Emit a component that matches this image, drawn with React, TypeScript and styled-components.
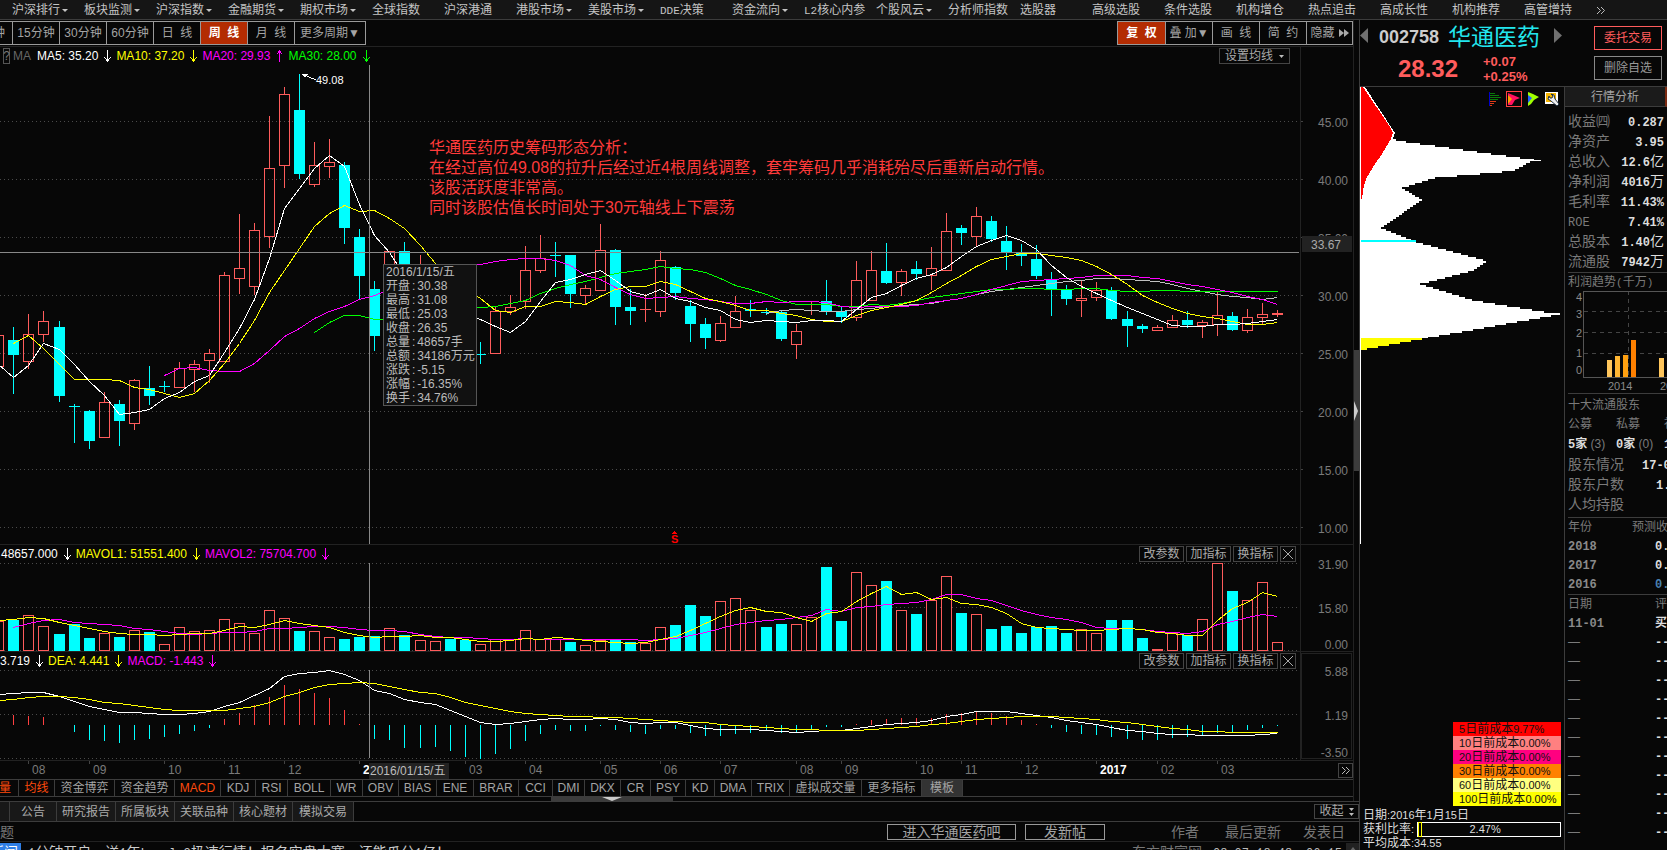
import React from "react";
import styled, { createGlobalStyle } from "styled-components";

const GlobalStyle = createGlobalStyle`
  *, *::before, *::after { box-sizing: border-box; }
  body { margin: 0; background: #070707; overflow: hidden; }
  button { margin: 0; padding: 0; font: inherit; color: inherit; background: none; border: 0; cursor: pointer; }
  h1, h2, p, ul, dl, dd, dt { margin: 0; padding: 0; font: inherit; list-style: none; }
  table { border-collapse: collapse; }
`;

const SANS = `"Liberation Sans", "Noto Sans CJK SC", sans-serif`;
const MONO = `"Liberation Mono", "Noto Sans CJK SC", monospace`;
const CYAN = "#00ffff";
const RED = "#ff5c5c";
const LINE = "#3c3c3c";

/* ---------- text with half-width latin runs ---------- */

const Latin = styled.span<{ $size: number; $sans?: boolean }>`
  font-family: ${(p) => (p.$sans ? SANS : MONO)};
  font-size: ${(p) => p.$size}px;
  line-height: 0;
`;

function Mixed({ text, size = 11, sans = false }: { text: string; size?: number; sans?: boolean }) {
  return (
    <>
      {text.split(/([\x20-\x7e]+)/).map((part, i) =>
        i % 2 ? <Latin key={i} $size={size} $sans={sans}>{part}</Latin> : part
      )}
    </>
  );
}

/* ---------- page frame ---------- */

const Page = styled.div`
  display: flex;
  flex-direction: column;
  height: 100vh;
  overflow: hidden;
  background: #070707;
  color: #aaa;
  font: 12px/14px ${SANS};
  white-space: nowrap;
`;

const Nav = styled.nav`
  display: flex;
  flex: none;
  height: 20px;
  padding-top: 1px;
  padding-left: 12px;
  background: #151515;
  border-bottom: 1px solid ${LINE};
  overflow: hidden;
`;

const NavItem = styled.button<{ $menu?: boolean }>`
  display: flex;
  align-items: center;
  flex: none;
  width: 72px;
  color: #c4c4c4;
  &::after {
    content: "";
    display: ${(p) => (p.$menu ? "block" : "none")};
    margin-left: 2px;
    border: 3px solid transparent;
    border-top-color: #c4c4c4;
    border-bottom: 0;
  }
`;

const Body = styled.div`
  display: grid;
  grid-template-columns: minmax(0, 1fr) 308px;
  flex: 1;
  min-height: 0;
`;

const Left = styled.main`
  display: flex;
  flex-direction: column;
  min-width: 0;
  overflow: hidden;
`;

const Upper = styled.div`
  display: flex;
  border-bottom: 1px solid ${LINE};
`;

const Charts = styled.div`
  flex: 1;
  min-width: 0;
  border-right: 1px solid #222;
`;

const Splitter = styled.div`
  display: flex;
  justify-content: center;
  flex-direction: column;
  width: 5px;
`;

const SplitHandle = styled.button`
  display: flex;
  align-items: center;
  width: 5px;
  height: 121px;
  background: ${LINE};
`;

/* ---------- toolbar ---------- */

const Toolbar = styled.div`
  display: flex;
  justify-content: space-between;
  height: 27px;
  padding-top: 1px;
  border-bottom: 1px solid #222;
`;

const ToolGroup = styled.div<{ $open?: boolean }>`
  display: flex;
  height: 24px;
  border: 1px solid #999;
  border-left-width: ${(p) => (p.$open ? 0 : 1)}px;
`;

const ToolButton = styled.button<{ $w: number; $on?: boolean; $end?: boolean }>`
  display: flex;
  align-items: center;
  justify-content: ${(p) => (p.$end ? "flex-end" : "center")};
  gap: 4px;
  white-space: pre;
  width: ${(p) => p.$w}px;
  padding-right: ${(p) => (p.$end ? 7 : 0)}px;
  overflow: hidden;
  border-right: 1px solid #999;
  background: ${(p) => (p.$on ? "#b32c02" : "transparent")};
  color: ${(p) => (p.$on ? "#fff" : "#a4a4a4")};
  font-weight: ${(p) => (p.$on ? 700 : 400)};
  &:last-child { border-right: 0; }
`;

/* ---------- chart panes ---------- */

const Pane = styled.section`
  display: flex;
  border-bottom: 1px solid #222;
`;

const Plot = styled.div`
  display: flex;
  flex-direction: column;
  flex: 1;
  min-width: 0;
  position: relative;
`;

const PaneHead = styled.header`
  display: flex;
  align-items: center;
  justify-content: space-between;
  height: 18px;
  padding-right: 4px;
`;

const Legend = styled.div<{ $pad: number }>`
  display: flex;
  align-items: center;
  padding-left: ${(p) => p.$pad}px;
`;

const LegendText = styled.span<{ $c: string }>`
  color: ${(p) => p.$c};
`;

const HelpMark = styled.button`
  width: 7px;
  height: 16px;
  margin-right: 3px;
  border: 1px solid #555;
  color: #777;
  line-height: 14px;
  display: flex;
  justify-content: center;
`;

const LegendName = styled.span`
  width: 24px;
  color: #666;
`;

const PaneTools = styled.div`
  display: flex;
  gap: 2px;
`;

const PaneButton = styled.button<{ $w: number }>`
  display: flex;
  align-items: center;
  justify-content: center;
  gap: 6px;
  width: ${(p) => p.$w}px;
  height: 16px;
  border: 1px solid #444;
  line-height: 14px;
`;

const Drawing = styled.svg<{ $h: number }>`
  display: block;
  width: 100%;
  height: ${(p) => p.$h}px;
  overflow: hidden;
`;

const Axis = styled.svg<{ $h: number; $box?: boolean }>`
  display: block;
  flex: none;
  width: 53px;
  height: ${(p) => p.$h}px;
  border-left: 1px solid #222;
  outline: ${(p) => (p.$box ? "1px solid #222" : "none")};
  outline-offset: -2px;
  font: 12px ${SANS};
  fill: #7a7a7a;
`;

const Tooltip = styled.dl`
  position: absolute;
  left: 383px;
  top: 217px;
  width: 94px;
  padding-left: 2px;
  background: #111;
  border: 1px solid #555;
  color: #bcbcbc;
`;

const TipRow = styled.div`
  display: flex;
  gap: 2px;
  height: 14px;
`;

const Note = styled.p`
  position: absolute;
  left: 429px;
  top: 91px;
  color: #ff3b3b;
  font-size: 16px;
  line-height: 20px;
`;

const HighMark = styled.span`
  position: absolute;
  left: 316px;
  top: 26px;
  color: #fff;
`;

const TimeAxis = styled.div`
  position: relative;
  display: flex;
  align-items: center;
  justify-content: flex-end;
  height: 18px;
`;

const TimeSvg = styled.svg`
  flex: 1;
  min-width: 0;
  height: 18px;
  font: 12px ${SANS};
  fill: #7a7a7a;
`;

const DateFlag = styled.span`
  position: absolute;
  left: 369px;
  top: 2px;
  width: 80px;
  height: 16px;
  padding-left: 1px;
  line-height: 17px;
  background: #222;
  color: #bcbcbc;
`;

const MoreButton = styled.button`
  display: flex;
  align-items: center;
  justify-content: center;
  width: 15px;
  height: 15px;
  border: 1px solid #444;
`;

const IndicatorBar = styled.div`
  display: flex;
  height: 18px;
  border-top: 1px solid ${LINE};
  border-bottom: 1px solid ${LINE};
`;

const Indicator = styled.button<{ $w: number; $hot?: boolean; $fill?: boolean }>`
  display: flex;
  align-items: center;
  justify-content: center;
  flex: none;
  width: ${(p) => p.$w}px;
  overflow: hidden;
  border-right: 1px solid ${LINE};
  background: ${(p) => (p.$fill ? "#333" : "transparent")};
  color: ${(p) => (p.$hot ? "#ff4a0c" : "#a4a4a4")};
`;

const FirstIndicator = styled(Indicator)`
  justify-content: flex-end;
  padding-right: 7px;
`;

const BottomHandle = styled.button`
  display: flex;
  justify-content: center;
  width: 122px;
  height: 4px;
  margin-left: 551px;
  background: ${LINE};
`;

/* ---------- lower strips ---------- */

const TabBar = styled.div`
  display: flex;
  align-items: center;
  justify-content: space-between;
  flex: none;
  height: 20px;
  border-bottom: 1px solid ${LINE};
`;

const Tabs = styled.div`
  display: flex;
  height: 19px;
`;

const Tab = styled.button<{ $w: number }>`
  width: ${(p) => p.$w}px;
  background: #181818;
  border-right: 1px solid ${LINE};
`;

const FoldButton = styled.button`
  display: flex;
  align-items: center;
  justify-content: center;
  gap: 5px;
  width: 45px;
  height: 15px;
  border: 1px solid #444;
  line-height: 13px;
`;

const BoardHead = styled.div`
  display: flex;
  align-items: center;
  justify-content: space-between;
  flex: none;
  height: 20px;
  border-bottom: 1px solid #222;
  color: #777;
  font-size: 14px;
`;

const BoardRight = styled.div`
  display: flex;
  align-items: center;
`;

const BoardButton = styled.button<{ $w: number }>`
  width: ${(p) => p.$w}px;
  height: 16px;
  margin-right: 9px;
  border: 1px solid #999;
  color: #a4a4a4;
  line-height: 14px;
`;

const HeadCell = styled.span<{ $w: number; $first?: boolean }>`
  width: ${(p) => p.$w}px;
  margin-left: ${(p) => (p.$first ? 57 : 0)}px;
`;

const PostRow = styled.div`
  display: flex;
  justify-content: space-between;
  flex: none;
  height: 22px;
  padding-top: 1px;
  font-size: 14px;
  line-height: 19px;
`;

const PostTag = styled.span`
  display: inline-flex;
  justify-content: flex-end;
  width: 21px;
  margin-right: 7px;
  padding-right: 3px;
  background: #2f7fe6;
  color: #fff;
  overflow: hidden;
`;

const PostTitle = styled.a`
  display: flex;
  color: #ccc;
  text-decoration: none;
`;

const PostMeta = styled.div`
  display: flex;
  color: #bbb;
`;

const PostCell = styled.span<{ $w: number; $dim?: boolean }>`
  width: ${(p) => p.$w}px;
  color: ${(p) => (p.$dim ? "#777" : "#bbb")};
`;

const ScrollUp = styled.button`
  width: 13px;
  height: 20px;
  background: #222;
  display: flex;
  justify-content: center;
  padding-top: 4px;
`;

/* ---------- right panel ---------- */

const Right = styled.aside`
  display: flex;
  flex-direction: column;
  min-width: 0;
  border-left: 1px solid ${LINE};
  overflow: hidden;
`;

const Quote = styled.header`
  display: flex;
  flex: none;
  justify-content: space-between;
  height: 67px;
  padding-right: 5px;
  border-bottom: 1px solid ${LINE};
`;

const QuoteMain = styled.div`
  width: 202px;
`;

const QuoteName = styled.div`
  display: flex;
  align-items: center;
  height: 33px;
`;

const Code = styled.span`
  width: 69px;
  margin-left: 11px;
  color: #ccc;
  font-size: 18px;
  font-weight: 700;
`;

const StockName = styled.h1`
  width: 106px;
  color: #22e6ee;
  font-size: 23px;
  line-height: 30px;
`;

const QuotePrice = styled.div`
  display: flex;
  align-items: center;
  padding-left: 38px;
  color: ${RED};
`;

const Price = styled.span`
  width: 85px;
  font-size: 24px;
  font-weight: 700;
  line-height: 32px;
`;

const Change = styled.span`
  font-size: 13px;
  font-weight: 700;
  line-height: 15px;
`;

const QuoteActions = styled.div`
  display: flex;
  flex-direction: column;
  gap: 6px;
  padding-top: 6px;
`;

const ActionButton = styled.button<{ $hot?: boolean }>`
  width: 68px;
  height: 24px;
  border: 1px solid ${(p) => (p.$hot ? RED : "#888")};
  color: ${(p) => (p.$hot ? RED : "#999")};
`;

const RightBody = styled.div`
  display: grid;
  grid-template-columns: 204px minmax(0, 1fr);
  flex: 1;
  min-height: 0;
`;

const Chips = styled.section`
  display: flex;
  flex-direction: column;
  position: relative;
  min-height: 0;
  color: #ddd;
`;

const ChipTools = styled.div`
  position: absolute;
  top: 4px;
  right: 4px;
  display: flex;
  gap: 3px;
`;

const ChipTool = styled.button<{ $on?: boolean }>`
  width: 16px;
  height: 16px;
  border: 1px solid ${(p) => (p.$on ? "#ff4040" : "transparent")};
`;

const CostList = styled.ul`
  width: 108px;
  margin: auto 3px 2px auto;
  color: #111;
`;

const CostItem = styled.li<{ $bg: string }>`
  height: 14px;
  padding-left: 6px;
  line-height: 14px;
  background: ${(p) => p.$bg};
`;

const ChipFoot = styled.div`
  padding-left: 3px;
  color: #ddd;
`;

const ChipLine = styled.p`
  display: flex;
  align-items: center;
  height: 14px;
  line-height: 14px;
`;

const Gauge = styled.div`
  display: flex;
  align-items: center;
  width: 144px;
  height: 15px;
  margin-left: 3px;
  border: 1px solid #fff;
`;

const GaugeFill = styled.span`
  width: 4px;
  height: 15px;
  border: 1px solid #ff0;
`;

const GaugeText = styled.span`
  flex: 1;
  padding-right: 12px;
  text-align: center;
`;

const Info = styled.section`
  display: flex;
  flex-direction: column;
  min-width: 0;
  overflow: hidden;
  border-left: 1px solid ${LINE};
  color: #7a7a7a;
`;

const InfoTab = styled.button`
  height: 20px;
  flex: none;
  background: #1b1b1b;
  border-bottom: 1px solid ${LINE};
  border-right: 2px solid #7a2a12;
  color: #a4a4a4;
`;

const InfoBlock = styled.div<{ $pt: number; $pb: number }>`
  flex: none;
  margin-left: 3px;
  padding: ${(p) => p.$pt}px 0 ${(p) => p.$pb}px;
  border-bottom: 1px solid ${LINE};
`;

const Facts = styled.table`
  width: 96px;
  font-size: 14px;
  line-height: 20px;
  th, td { padding: 0; height: 20px; font-weight: 400; text-align: left; }
  td { text-align: right; color: #ddd; font-weight: 700; }
`;

const Unit = styled.span`
  font-size: 14px;
  font-weight: 400;
`;

const Wide = styled.table<{ $lh: number; $fs: number; $first: number }>`
  width: 160px;
  table-layout: fixed;
  font-size: ${(p) => p.$fs}px;
  line-height: ${(p) => p.$lh}px;
  th, td { padding: 0; height: ${(p) => p.$lh}px; font-weight: 400; text-align: left; }
  th:first-child { width: ${(p) => p.$first}px; }
`;

const Strong = styled.span<{ $c?: string; $indent?: number }>`
  margin-left: ${(p) => p.$indent || 0}px;
  color: ${(p) => p.$c || "#ddd"};
  font-weight: 700;
`;

const InfoTitle = styled.h2`
  height: 18px;
  line-height: 18px;
`;

const Funds = styled.div`
  display: grid;
  grid-template-columns: 48px 48px 48px;
  line-height: 20px;
`;

/* ---------- data ---------- */

const NAV: [string, boolean][] = [
  ["沪深排行", true], ["板块监测", true], ["沪深指数", true], ["金融期货", true], ["期权市场", true],
  ["全球指数", false], ["沪深港通", false], ["港股市场", true], ["美股市场", true], ["DDE决策", false],
  ["资金流向", true], ["L2核心内参", false], ["个股风云", true], ["分析师指数", false], ["选股器", false],
  ["高级选股", false], ["条件选股", false], ["机构增仓", false], ["热点追击", false], ["高成长性", false],
  ["机构推荐", false], ["高管增持", false],
];

const COUNT = 86;
const barX = (i: number) => -2 + i * 15 + [4, 28, 51, 75].filter((n) => i >= n).length;

/* high, body top, body bottom, low, 1 when the week closed up */
const CANDLES: number[][] = [
  [335,335,367,367,1],[327,340,355,394,0],[314,334,362,369,1],[311,321,335,342,1],[321,327,396,402,0],
  [404,406,407,443,0],[410,411,441,449,0],[392,402,438,438,1],[400,404,421,446,0],[379,380,424,430,1],
  [366,388,396,405,0],[381,386,387,392,0],[362,368,388,388,1],[360,364,370,392,1],[349,353,361,383,1],
  [272,275,362,362,1],[214,268,279,294,1],[223,230,287,295,1],[116,168,237,248,1],[87,94,166,188,1],
  [74,110,174,179,0],[142,165,185,187,1],[139,162,167,178,1],[162,165,228,244,0],[229,237,276,299,0],
  [281,289,336,351,0],[251,251,300,300,1],[242,251,300,300,0],[255,270,300,310,1],[270,280,300,310,1],
  [290,300,330,340,0],[300,320,350,360,0],[342,354,355,364,0],[307,311,354,354,1],[295,307,312,315,1],
  [246,270,302,309,1],[235,258,271,273,1],[242,255,256,277,0],[255,255,294,308,0],[285,288,296,304,1],
  [224,250,291,291,1],[249,250,307,325,0],[289,307,311,325,0],[294,309,310,322,1],[251,260,312,317,1],
  [266,267,293,300,0],[300,306,324,342,0],[318,324,338,349,0],[316,323,341,342,1],[296,311,328,328,1],
  [300,309,311,317,0],[308,312,313,315,0],[311,312,339,341,0],[324,331,345,359,1],[301,301,302,315,1],
  [280,301,312,315,0],[307,311,317,323,0],[261,280,318,321,1],[251,270,301,301,1],[243,271,283,284,0],
  [269,271,283,296,1],[261,269,274,280,0],[247,268,276,290,1],[213,231,271,271,1],[225,228,233,245,0],
  [207,216,237,246,1],[216,221,239,242,0],[226,241,252,270,0],[244,253,256,266,0],[245,259,276,279,0],
  [272,279,289,316,0],[285,289,299,305,0],[281,298,301,317,1],[282,290,298,301,1],[287,290,319,320,0],
  [311,319,326,347,0],[324,326,329,333,0],[325,327,331,331,1],[315,320,328,328,1],[311,320,325,328,0],
  [320,322,326,338,1],[292,315,325,336,1],[312,316,330,331,0],[309,317,331,333,1],[303,314,318,324,1],
  [310,313,315,317,1],
];

const MA5 = [364,377,365,343,349,364,381,395,414,412,409,398,392,381,375,352,328,299,258,208,188,168,155,166,204,235,252,275,290,300,308,314,319,326,332,321,301,282,279,274,270,280,291,295,289,298,301,307,310,319,322,320,321,322,320,320,321,309,297,293,285,278,274,267,256,246,240,235,240,249,265,277,286,293,300,307,313,319,325,326,326,324,324,323,321,319];
const MA10 = [359,343,335,348,364,379,379,379,380,387,389,393,397,393,380,363,343,320,292,270,248,226,213,205,211,210,218,228,245,263,276,288,298,310,312,306,306,301,302,304,296,289,286,286,281,284,291,298,301,305,310,310,313,315,319,321,321,315,310,307,304,300,292,283,275,266,259,256,253,253,255,257,260,266,274,284,295,302,308,313,316,318,321,324,324,322];
const MA20 = [375,368,367,370,371,371,363,350,336,328,318,311,306,299,295,289,283,278,273,269,266,264,261,259,258,258,260,265,275,279,287,294,298,297,296,298,299,301,303,303,301,302,301,301,302,306,307,306,306,306,305,302,300,298,294,289,285,281,280,279,278,277,275,275,275,277,278,281,284,286,289,292,296,299,304];
const MA30 = [332,322,315,315,319,319,317,315,313,311,309,307,306,303,300,293,288,284,281,277,273,271,269,266,268,269,272,278,285,289,294,300,304,304,304,306,306,304,305,303,300,297,295,293,291,289,289,288,288,289,289,288,288,290,291,291,290,290,291,291,291,291,291,291,291];
const MA60 = [313,310,309,310,311,311,309,308,306,305,304,303,300,298,294,291,289,287,285,283,281,280,278,278,279,280,281,284,288,291,294,296,297,299,297];

/* top of each volume bar; negative marks a falling week */
const VOL = [621,-620,615,626,-634,-624,-638,633,-637,630,-632,644,627,631,630,619,623,633,610,618,-631,631,637,-639,-637,-636,628,-635,640,641,-639,-640,644,639,639,630,639,639,-642,645,640,-640,-642,643,627,-625,-605,-616,601,598,610,-627,-624,624,617,-567,-621,572,585,-581,610,-614,600,576,-613,614,-629,-626,-633,-627,-626,-633,629,633,-620,-620,-638,649,633,-635,619,563,-591,600,582,642];
const MAVOL1 = [620,619,617,618,622,625,628,631,633,634,634,635,634,633,633,630,626,627,624,620,623,625,627,632,635,637,636,636,635,637,637,639,641,641,640,638,639,637,638,640,641,642,643,642,639,636,630,623,616,610,607,611,612,617,621,613,611,601,593,586,594,592,599,597,603,604,607,613,623,627,628,629,630,630,629,628,629,632,633,635,635,620,608,602,592,596];
const MAVOL2 = [627,623,620,619,622,623,624,625,628,629,631,633,634,633,632,632,631,628,628,627,626,626,627,629,630,630,631,634,636,637,637,638,639,639,638,639,639,639,639,639,639,639,640,639,638,635,632,628,624,622,620,619,617,615,609,611,607,606,604,603,602,599,594,594,598,600,605,610,614,617,619,622,627,628,628,629,631,632,633,631,624,621,617,614,616];

const MACD_BARS = [725,715,716,717,725,732,740,741,743,740,739,737,734,731,728,719,713,705,697,685,689,693,698,710,724,739,740,748,748,747,751,757,759,754,749,741,734,730,731,731,726,730,732,734,729,729,733,736,736,734,733,731,733,733,729,727,727,724,720,719,718,718,718,714,713,711,713,716,720,724,728,732,734,735,737,739,740,740,738,737,735,733,732,730,728,726];
const DIF = [694,693,692,692,696,701,706,709,712,712,713,714,714,713,711,706,702,695,688,676,673,672,670,674,680,690,693,699,702,704,710,716,722,724,723,721,719,718,719,719,718,719,722,723,722,722,725,728,729,729,729,730,731,732,731,730,730,728,726,724,723,722,720,716,714,711,711,711,713,715,717,720,722,724,727,730,731,733,734,734,735,735,735,735,734,733];
const DEA = [700,699,697,696,696,697,699,702,703,705,707,709,710,710,710,710,708,706,702,696,692,687,684,683,682,683,686,689,692,693,697,702,705,708,711,713,714,715,716,716,717,717,718,719,720,721,722,722,724,725,726,727,728,729,729,730,730,730,729,728,727,726,724,723,721,719,718,717,716,716,716,717,718,719,721,722,724,726,728,729,731,731,732,732,732,732];

const MONTHS: [number, string][] = [
  [28,"08"],[89,"09"],[164,"10"],[224,"11"],[284,"12"],[359,"2016"],[465,"03"],[525,"04"],[600,"05"],[660,"06"],
  [720,"07"],[796,"08"],[841,"09"],[916,"10"],[961,"11"],[1021,"12"],[1096,"2017"],[1157,"02"],[1217,"03"],
];

const TIP: [string, string][] = [
  ["开盘","30.38"],["最高","31.08"],["最低","25.03"],["收盘","26.35"],["总量","48657手"],
  ["总额","34186万元"],["涨跌","-5.15"],["涨幅","-16.35%"],["换手","34.76%"],
];

const INDICATORS: [string, number][] = [
  ["均线",36],["资金博弈",60],["资金趋势",60],["MACD",46],["KDJ",35],["RSI",32],["BOLL",43],["WR",32],["OBV",36],
  ["BIAS",38],["ENE",37],["BRAR",45],["CCI",34],["DMI",32],["DKX",36],["CR",30],["PSY",35],["KD",29],["DMA",37],
  ["TRIX",38],["虚拟成交量",72],["更多指标",60],
];

const COSTS: [string, string][] = [
  ["5日前成本9.77%","#ff0000"],["10日前成本0.00%","#ff8080"],["20日前成本0.00%","#ff0080"],
  ["30日前成本0.00%","#ff8000"],["60日前成本0.00%","#ffff80"],["100日前成本0.00%","#ffff00"],
];

const FACTS: [string, string, string][] = [
  ["收益㈣","0.287",""],["净资产","3.95",""],["总收入","12.6","亿"],["净利润","4016","万"],
  ["毛利率","11.43%",""],["ROE","7.41%",""],["总股本","1.40","亿"],["流通股","7942","万"],
];

/* ---------- drawing helpers ---------- */

function Curve({ ys, from = 0, color }: { ys: number[]; from?: number; color: string }) {
  return (
    <polyline
      fill="none"
      stroke={color}
      points={ys.map((y, k) => `${barX(from + k) + 0.5},${y + 0.5}`).join(" ")}
    />
  );
}

function Grid({ ys }: { ys: number[] }) {
  return (
    <>
      {ys.map((y) => (
        <line key={y} x1="0" x2="100%" y1={y + 0.5} y2={y + 0.5} stroke="#4a4a4a" strokeDasharray="1 3" />
      ))}
    </>
  );
}

function Arrow({ color, up }: { color: string; up?: boolean }) {
  return (
    <svg width="18" height="12" viewBox="0 0 18 12" shapeRendering="crispEdges" aria-hidden="true">
      <path
        d={up ? "M9.5 12V1M6.5 4.5L9.5 1L12.5 4.5" : "M9.5 0V11M6.5 7.5L9.5 11L12.5 7.5"}
        fill="none"
        stroke={color}
      />
    </svg>
  );
}

function Candle({ i }: { i: number }) {
  const [hi, top, bottom, lo, up] = CANDLES[i];
  const x = barX(i);
  const c = up ? RED : CYAN;
  const h = bottom - top;
  return (
    <g>
      {hi < top && <rect x={x} y={hi} width="1" height={top - hi} fill={c} />}
      {lo > bottom && <rect x={x} y={bottom} width="1" height={lo - bottom} fill={c} />}
      {up && h > 2 ? (
        <rect x={x - 4.5} y={top + 0.5} width="10" height={h - 1} fill="none" stroke={c} />
      ) : (
        <rect x={x - 5} y={top} width="11" height={h} fill={c} />
      )}
    </g>
  );
}

function DoubleChevron() {
  return (
    <svg width="9" height="9" viewBox="0 0 9 9" aria-hidden="true">
      <path d="M1 1L4.500 4.500L1 8M5 1L8.500 4.500L5 8" fill="none" stroke="#bbb" />
    </svg>
  );
}

function PaneActions() {
  return (
    <PaneTools>
      <PaneButton $w={45}>改参数</PaneButton>
      <PaneButton $w={45}>加指标</PaneButton>
      <PaneButton $w={45}>换指标</PaneButton>
      <PaneButton $w={16} aria-label="关闭">
        <svg width="10" height="10" viewBox="0 0 10 10"><path d="M0 0L10 10M10 0L0 10" stroke="#aaa" /></svg>
      </PaneButton>
    </PaneTools>
  );
}

/* right edge of the chip histogram: x, y */
const CHIP_EDGE: [number, number][] = [
  [4,0],[30,41],[34,46],[32,52],[39,54],[174,73],[153,84],[75,91],[42,101],[62,113],[21,141],[56,155],
  [127,174],[112,184],[65,196],[60,197],[66,199],[112,213],[123,215],[190,226],[200,227],[191,229],[68,251],[7,262],[1,263],
];

function edgeAt(y: number) {
  for (let k = 1; k < CHIP_EDGE.length; k++) {
    const [x0, y0] = CHIP_EDGE[k - 1];
    const [x1, y1] = CHIP_EDGE[k];
    if (y <= y1) return Math.round(x0 + ((x1 - x0) * (y - y0)) / (y1 - y0));
  }
  return 1;
}

function steps(from: number, to: number) {
  let d = `M1 ${from}`;
  for (let y = from; y < to; y += 2) d += `H${edgeAt(y + 1)}V${Math.min(y + 2, to)}`;
  return d + "H1Z";
}

function ChipChart() {
  return (
    <Drawing $h={457} shapeRendering="crispEdges" aria-label="筹码分布">
      <path d={steps(52, 251)} fill="#fff" />
      <path d="M1 0H5L35 46L33 52L1 113Z" fill="#fff" />
      <path d="M174 73H181V74H174Z" fill="#fff" />
      <path d="M1 0H3L30 40L33 46L31 52L22 67L15 77L7 90L4 98L2 112H1Z" fill="#f00" />
      <path d={steps(251, 263)} fill="#ff0" />
      <rect x="1" y="153" width="55" height="2" fill={CYAN} />
      <rect x="0" y="0" width="1" height="457" fill="#fff" />
    </Drawing>
  );
}

function ProfitChart() {
  return (
    <Drawing $h={102} shapeRendering="crispEdges" fill="#8a8a8a" fontFamily="Liberation Sans, sans-serif" fontSize="11">
      <path d="M16 20.5H100M16 41.5H100M16 62.5H100" stroke="#444" strokeDasharray="4 4" />
      <path d="M60.5 0V86" stroke="#444" strokeDasharray="4 4" />
      <path d="M110 0.5H15.5V86.5H110" fill="none" stroke="#555" />
      {([["4", 10], ["3", 27], ["2", 46], ["1", 66], ["0", 83]] as [string, number][]).map(([t, y]) => (
        <text key={t} x="14" y={y} textAnchor="end">{t}</text>
      ))}
      <rect x="39" y="69" width="5" height="17" fill="#ffc65c" />
      <rect x="47" y="65" width="5" height="21" fill="#ffb633" />
      <rect x="55" y="64" width="5" height="22" fill="#ffa010" />
      <rect x="63" y="49" width="5" height="37" fill="#ff8000" />
      <rect x="91" y="67" width="5" height="19" fill="#ffc65c" />
      <text x="40" y="99">2014</text>
      <text x="92" y="99">2015</text>
    </Drawing>
  );
}

/* ---------- page ---------- */

export default function App() {
  const bars = Array.from({ length: COUNT }, (_, i) => i);
  return (
    <>
      <GlobalStyle />
      <Page>
        <Nav>
          {NAV.map(([t, menu]) => (
            <NavItem key={t} $menu={menu}><span><Mixed text={t} /></span></NavItem>
          ))}
          <NavItem aria-label="更多"><DoubleChevron /></NavItem>
        </Nav>

        <Body>
          <Left>
            <Upper>
              <Charts>
                <Toolbar>
                  <ToolGroup $open>
                    <ToolButton $w={13} $end>5分钟</ToolButton>
                    <ToolButton $w={47}>15分钟</ToolButton>
                    <ToolButton $w={47}>30分钟</ToolButton>
                    <ToolButton $w={47}>60分钟</ToolButton>
                    <ToolButton $w={47}>日  线</ToolButton>
                    <ToolButton $w={47} $on>周  线</ToolButton>
                    <ToolButton $w={47}>月  线</ToolButton>
                    <ToolButton $w={70}>更多周期▼</ToolButton>
                  </ToolGroup>
                  <ToolGroup>
                    <ToolButton $w={48} $on>复  权</ToolButton>
                    <ToolButton $w={47}>叠 加▼</ToolButton>
                    <ToolButton $w={47}>画  线</ToolButton>
                    <ToolButton $w={47}>简  约</ToolButton>
                    <ToolButton $w={45}>
                      隐藏
                      <svg width="10" height="8" viewBox="0 0 10 8"><path d="M0 0L5 4L0 8ZM5 0L10 4L5 8Z" fill="#aaa" /></svg>
                    </ToolButton>
                  </ToolGroup>
                </Toolbar>

                <Pane>
                  <Plot>
                    <PaneHead>
                      <Legend $pad={3}>
                        <HelpMark>?</HelpMark>
                        <LegendName>MA</LegendName>
                        <LegendText $c="#fff">MA5: 35.20</LegendText><Arrow color="#fff" />
                        <LegendText $c="#ff0">MA10: 37.20</LegendText><Arrow color="#ff0" />
                        <LegendText $c="#f0f">MA20: 29.93</LegendText><Arrow color="#f0f" up />
                        <LegendText $c="#0f0">MA30: 28.00</LegendText><Arrow color="#0f0" />
                      </Legend>
                      <PaneTools>
                        <PaneButton $w={71}>
                          设置均线
                          <svg width="5" height="3" viewBox="0 0 5 3"><path d="M0 0H5L2.500 3Z" fill="#bbb" /></svg>
                        </PaneButton>
                        <span />
                        <span />
                        <span />
                      </PaneTools>
                    </PaneHead>
                    <Drawing $h={479} shapeRendering="crispEdges">
                      <g transform="translate(0 -65)">
                        <Grid ys={[121, 179, 237, 295, 353, 411, 469, 527]} />
                        {bars.map((i) => <Candle key={i} i={i} />)}
                        <Curve ys={MA60} from={51} color="#c0c0c0" />
                        <Curve ys={MA30} from={21} color="#0f0" />
                        <Curve ys={MA20} from={11} color="#f0f" />
                        <Curve ys={MA10.slice(1)} from={1} color="#ff0" />
                        <Curve ys={MA5} color="#fff" />
                        <path d="M302 74L316 80" stroke="#fff" />
                        <path d="M301 74H308L305 78Z" fill="#fff" />
                        <path d="M0 252.500H1299M369.500 65V544" stroke="#888" />
                        <path d="M672 534L674.500 531L677 534Z" fill="#f00" />
                        <text x="671" y="543" fill="#f00" fontFamily="Liberation Sans, sans-serif" fontSize="11" fontWeight="700">S</text>
                      </g>
                    </Drawing>
                    <HighMark><Mixed text="49.08" sans /></HighMark>
                    <Note>
                      华通医药历史筹码形态分析：<br />
                      在经过高位49.08的拉升后经过近4根周线调整，套牢筹码几乎消耗殆尽后重新启动行情。<br />
                      该股活跃度非常高。<br />
                      同时该股估值长时间处于30元轴线上下震荡
                    </Note>
                    <Tooltip>
                      <TipRow>2016/1/15/五</TipRow>
                      {TIP.map(([k, v]) => (
                        <TipRow key={k}><dt>{k}</dt><span>:</span><dd>{v}</dd></TipRow>
                      ))}
                    </Tooltip>
                  </Plot>
                  <Axis $h={497}>
                    {["45.00", "40.00", "35.00", "30.00", "25.00", "20.00", "15.00", "10.00"].map((t, k) => (
                      <text key={t} x="47" y={80 + k * 58} textAnchor="end">{t}</text>
                    ))}
                    {[0, 1, 2, 3, 4, 5, 6, 7].map((k) => (
                      <rect key={k} x="0" y={74 + k * 58} width="2" height="1" fill="#444" />
                    ))}
                    <rect x="1" y="189" width="50" height="16" fill="#222" />
                    <text x="40" y="202" textAnchor="end" fill="#aaa">33.67</text>
                  </Axis>
                </Pane>

                <Pane>
                  <Plot>
                    <PaneHead>
                      <Legend $pad={1}>
                        <LegendText $c="#fff">48657.000</LegendText><Arrow color="#fff" />
                        <LegendText $c="#ff0">MAVOL1: 51551.400</LegendText><Arrow color="#ff0" />
                        <LegendText $c="#f0f">MAVOL2: 75704.700</LegendText><Arrow color="#f0f" />
                      </Legend>
                      <PaneActions />
                    </PaneHead>
                    <Drawing $h={88} shapeRendering="crispEdges">
                      <g transform="translate(0 -563)">
                        <Grid ys={[563, 607, 650]} />
                        {VOL.map((v, i) =>
                          v < 0 ? (
                            <rect key={i} x={barX(i) - 5} y={-v} width="11" height={651 + v} fill={CYAN} />
                          ) : (
                            <rect key={i} x={barX(i) - 4.5} y={v + 0.5} width="10" height={650 - v} fill="#070707" stroke={RED} />
                          )
                        )}
                        <Curve ys={MAVOL2} from={1} color="#f0f" />
                        <Curve ys={MAVOL1} color="#ff0" />
                        <path d="M369.500 563V651" stroke="#888" />
                      </g>
                    </Drawing>
                  </Plot>
                  <Axis $h={106}>
                    <text x="47" y="24" textAnchor="end">31.90</text>
                    <text x="47" y="68" textAnchor="end">15.80</text>
                    <text x="47" y="104" textAnchor="end">0.00</text>
                  </Axis>
                </Pane>

                <Pane>
                  <Plot>
                    <PaneHead>
                      <Legend $pad={0}>
                        <LegendText $c="#fff">3.719</LegendText><Arrow color="#fff" />
                        <LegendText $c="#ff0">DEA: 4.441</LegendText><Arrow color="#ff0" />
                        <LegendText $c="#f0f">MACD: -1.443</LegendText><Arrow color="#f0f" />
                      </Legend>
                      <PaneActions />
                    </PaneHead>
                    <Drawing $h={90} shapeRendering="crispEdges">
                      <g transform="translate(0 -670)">
                        <Grid ys={[670, 714, 758]} />
                        {MACD_BARS.map((y, i) => (
                          <rect
                            key={i}
                            x={barX(i)}
                            y={Math.min(y, 725)}
                            width="1"
                            height={Math.abs(y - 725)}
                            fill={y < 725 ? "#ff4040" : CYAN}
                          />
                        ))}
                        <Curve ys={DIF} color="#fff" />
                        <Curve ys={DEA} color="#ff0" />
                        <path d="M369.500 670V758" stroke="#888" />
                      </g>
                    </Drawing>
                  </Plot>
                  <Axis $h={108} $box>
                    <text x="47" y="24" textAnchor="end">5.88</text>
                    <text x="47" y="68" textAnchor="end">1.19</text>
                    <text x="47" y="105" textAnchor="end">-3.50</text>
                  </Axis>
                </Pane>

                <TimeAxis>
                  <TimeSvg>
                    {MONTHS.map(([x, t]) => (
                      <g key={x}>
                        <rect x={x} y="0" width="1" height="3" fill="#444" />
                        <text x={x + 4} y="13" fill={t.length > 2 ? "#fff" : undefined} fontWeight={t.length > 2 ? 700 : 400}>{t}</text>
                      </g>
                    ))}
                  </TimeSvg>
                  <DateFlag>2016/01/15/五</DateFlag>
                  <MoreButton aria-label="更多"><DoubleChevron /></MoreButton>
                </TimeAxis>

                <IndicatorBar>
                  <FirstIndicator $w={19} $hot>量</FirstIndicator>
                  {INDICATORS.map(([t, w]) => (
                    <Indicator key={t} $w={w} $hot={t === "均线" || t === "MACD"}>{t}</Indicator>
                  ))}
                  <Indicator $w={41} $fill>模板</Indicator>
                </IndicatorBar>
                <BottomHandle aria-label="收起图表">
                  <svg width="20" height="4" viewBox="0 0 20 4"><path d="M0 0H20L10 4Z" fill="#ccc" /></svg>
                </BottomHandle>
              </Charts>
              <Splitter>
                <SplitHandle aria-label="收起侧栏">
                  <svg width="5" height="20" viewBox="0 0 5 20"><path d="M0 0V20L4 10Z" fill="#ccc" /></svg>
                </SplitHandle>
              </Splitter>
            </Upper>

            <TabBar>
              <Tabs>
                <Tab $w={10} aria-label="上一页" />
                <Tab $w={47}>公告</Tab>
                <Tab $w={59}>研究报告</Tab>
                <Tab $w={59}>所属板块</Tab>
                <Tab $w={59}>关联品种</Tab>
                <Tab $w={59}>核心题材</Tab>
                <Tab $w={61}>模拟交易</Tab>
              </Tabs>
              <FoldButton>
                收起
                <svg width="5" height="8" viewBox="0 0 5 8"><path d="M0 0H5L2.500 3ZM0 5H5L2.500 8Z" fill="#bbb" /></svg>
              </FoldButton>
            </TabBar>

            <BoardHead>
              <span>题</span>
              <BoardRight>
                <BoardButton $w={129}>进入华通医药吧</BoardButton>
                <BoardButton $w={80}>发新帖</BoardButton>
                <HeadCell $w={54} $first>作者</HeadCell>
                <HeadCell $w={78}>最后更新</HeadCell>
                <HeadCell $w={56}>发表日</HeadCell>
              </BoardRight>
            </BoardHead>

            <PostRow>
              <PostTitle href="#post">
                <PostTag>新闻</PostTag>
                <span><Mixed size={12} text="1分钟开户，送1年Level-2极速行情！报名实盘大赛，还能瓜分1亿！" /></span>
              </PostTitle>
              <PostMeta>
                <PostCell $w={81} $dim>东方财富网</PostCell>
                <PostCell $w={93}><Mixed size={12} text="08-07 18:48" /></PostCell>
                <PostCell $w={40}><Mixed size={12} text="06-15" /></PostCell>
                <ScrollUp aria-label="向上滚动">
                  <svg width="8" height="5" viewBox="0 0 8 5"><path d="M4 0L8 5H0Z" fill="#666" /></svg>
                </ScrollUp>
              </PostMeta>
            </PostRow>
          </Left>

          <Right>
            <Quote>
              <QuoteMain>
                <QuoteName>
                  <button aria-label="上一只">
                    <svg width="8" height="15" viewBox="0 0 8 15"><path d="M8 0V15L0 7.500Z" fill="#707070" /></svg>
                  </button>
                  <Code>002758</Code>
                  <StockName>华通医药</StockName>
                  <button aria-label="下一只">
                    <svg width="8" height="15" viewBox="0 0 8 15"><path d="M0 0V15L8 7.500Z" fill="#707070" /></svg>
                  </button>
                </QuoteName>
                <QuotePrice>
                  <Price>28.32</Price>
                  <Change>+0.07<br />+0.25%</Change>
                </QuotePrice>
              </QuoteMain>
              <QuoteActions>
                <ActionButton $hot>委托交易</ActionButton>
                <ActionButton>删除自选</ActionButton>
              </QuoteActions>
            </Quote>

            <RightBody>
              <Chips>
                <ChipChart />
                <ChipTools>
                  <ChipTool aria-label="分布">
                    <svg width="14" height="14" viewBox="0 0 14 14" shapeRendering="crispEdges">
                      <path d="M1.500 0V14" stroke="#00c" />
                      <path d="M2 1.500H7M2 3.500H11M2 5.500H13M2 7.500H10" stroke="#0a7a0a" />
                      <path d="M2 9.500H8M2 11.500H6M2 13.500H4" stroke="#e03a18" />
                    </svg>
                  </ChipTool>
                  <ChipTool $on aria-label="远期筹码">
                    <svg width="14" height="14" viewBox="0 0 14 14">
                      <path d="M1 1L6 3L13 6L8 8L5 13L1 13Z" fill="#ff1060" />
                      <path d="M1 3L5 7L1 12Z" fill="#ffa000" />
                    </svg>
                  </ChipTool>
                  <ChipTool aria-label="近期筹码">
                    <svg width="14" height="14" viewBox="0 0 14 14">
                      <path d="M2 0L7 2L13 5L8 8L5 12L2 14Z" fill="#a0ff00" />
                      <path d="M2 3L6 6L2 11Z" fill="#2060ff" />
                    </svg>
                  </ChipTool>
                  <ChipTool aria-label="设置">
                    <svg width="14" height="14" viewBox="0 0 14 14">
                      <rect width="13" height="12" fill="#fff" />
                      <rect x="1" y="1" width="10" height="9" fill="#f5b400" />
                      <path d="M6 2L8 4L7 6L5 6L4 4L3 7L6 9L12 14L14 12L10 7L9 3Z" fill="#eee" stroke="#234" />
                    </svg>
                  </ChipTool>
                </ChipTools>
                <CostList>
                  {COSTS.map(([t, bg]) => <CostItem key={t} $bg={bg}><Mixed text={t} sans /></CostItem>)}
                </CostList>
                <ChipFoot>
                  <ChipLine><span><Mixed text="日期:2016年1月15日" sans /></span></ChipLine>
                  <ChipLine as="div">
                    <span><Mixed text="获利比率:" sans /></span>
                    <Gauge><GaugeFill /><GaugeText><Mixed text="2.47%" sans /></GaugeText></Gauge>
                  </ChipLine>
                  <ChipLine><span><Mixed text="平均成本:34.55" sans /></span></ChipLine>
                </ChipFoot>
              </Chips>

              <Info>
                <InfoTab>行情分析</InfoTab>
                <InfoBlock $pt={4} $pb={1}>
                  <Facts>
                    <tbody>
                      {FACTS.map(([k, v, u]) => (
                        <tr key={k}>
                          <th scope="row"><Mixed text={k} size={12} /></th>
                          <td><Latin $size={12}>{v}</Latin><Unit>{u}</Unit></td>
                        </tr>
                      ))}
                    </tbody>
                  </Facts>
                </InfoBlock>
                <InfoBlock $pt={0} $pb={0}>
                  <InfoTitle><Mixed text="利润趋势(千万)" /></InfoTitle>
                  <ProfitChart />
                </InfoBlock>
                <InfoBlock $pt={2} $pb={3}>
                  <InfoTitle>十大流通股东</InfoTitle>
                  <Funds>
                    <span>公募</span><span>私募</span><span>社保</span>
                    <span><Strong><Latin $size={12}>5</Latin>家</Strong> <Latin $size={12} $sans>(3)</Latin></span>
                    <span><Strong><Latin $size={12}>0</Latin>家</Strong> <Latin $size={12} $sans>(0)</Latin></span>
                    <span><Strong><Latin $size={12}>1</Latin>家</Strong></span>
                  </Funds>
                  <Wide $lh={20} $fs={14} $first={74}>
                    <tbody>
                      <tr><th scope="row">股东情况</th><td><Strong><Latin $size={12}>17-09</Latin></Strong></td></tr>
                      <tr><th scope="row">股东户数</th><td><Strong $indent={14}><Latin $size={12}>1.5</Latin></Strong></td></tr>
                      <tr><th scope="row">人均持股</th><td /></tr>
                    </tbody>
                  </Wide>
                </InfoBlock>
                <InfoBlock $pt={0} $pb={0}>
                  <Wide $lh={19} $fs={12} $first={64}>
                    <tbody>
                      <tr><th scope="col">年份</th><th scope="col">预测收益</th></tr>
                      {[["2018", "#ddd"], ["2017", "#ddd"], ["2016", "#4a80b0"]].map(([y, c]) => (
                        <tr key={y}>
                          <th scope="row"><Strong $c="#8a8a8a"><Latin $size={12}>{y}</Latin></Strong></th>
                          <td><Strong $c={c} $indent={23}><Latin $size={12}>0.3</Latin></Strong></td>
                        </tr>
                      ))}
                    </tbody>
                  </Wide>
                </InfoBlock>
                <InfoBlock $pt={0} $pb={0}>
                  <Wide $lh={19} $fs={12} $first={87}>
                    <tbody>
                      <tr><th scope="col">日期</th><th scope="col">评级</th></tr>
                      <tr>
                        <th scope="row"><Strong $c="#8a8a8a"><Latin $size={12}>11-01</Latin></Strong></th>
                        <td><Strong>买入</Strong></td>
                      </tr>
                      {bars.slice(0, 12).map((k) => (
                        <tr key={k}><th scope="row"><Mixed text="—" /></th><td><Strong><Latin $size={12}>--</Latin></Strong></td></tr>
                      ))}
                    </tbody>
                  </Wide>
                </InfoBlock>
              </Info>
            </RightBody>
          </Right>
        </Body>
      </Page>
    </>
  );
}
